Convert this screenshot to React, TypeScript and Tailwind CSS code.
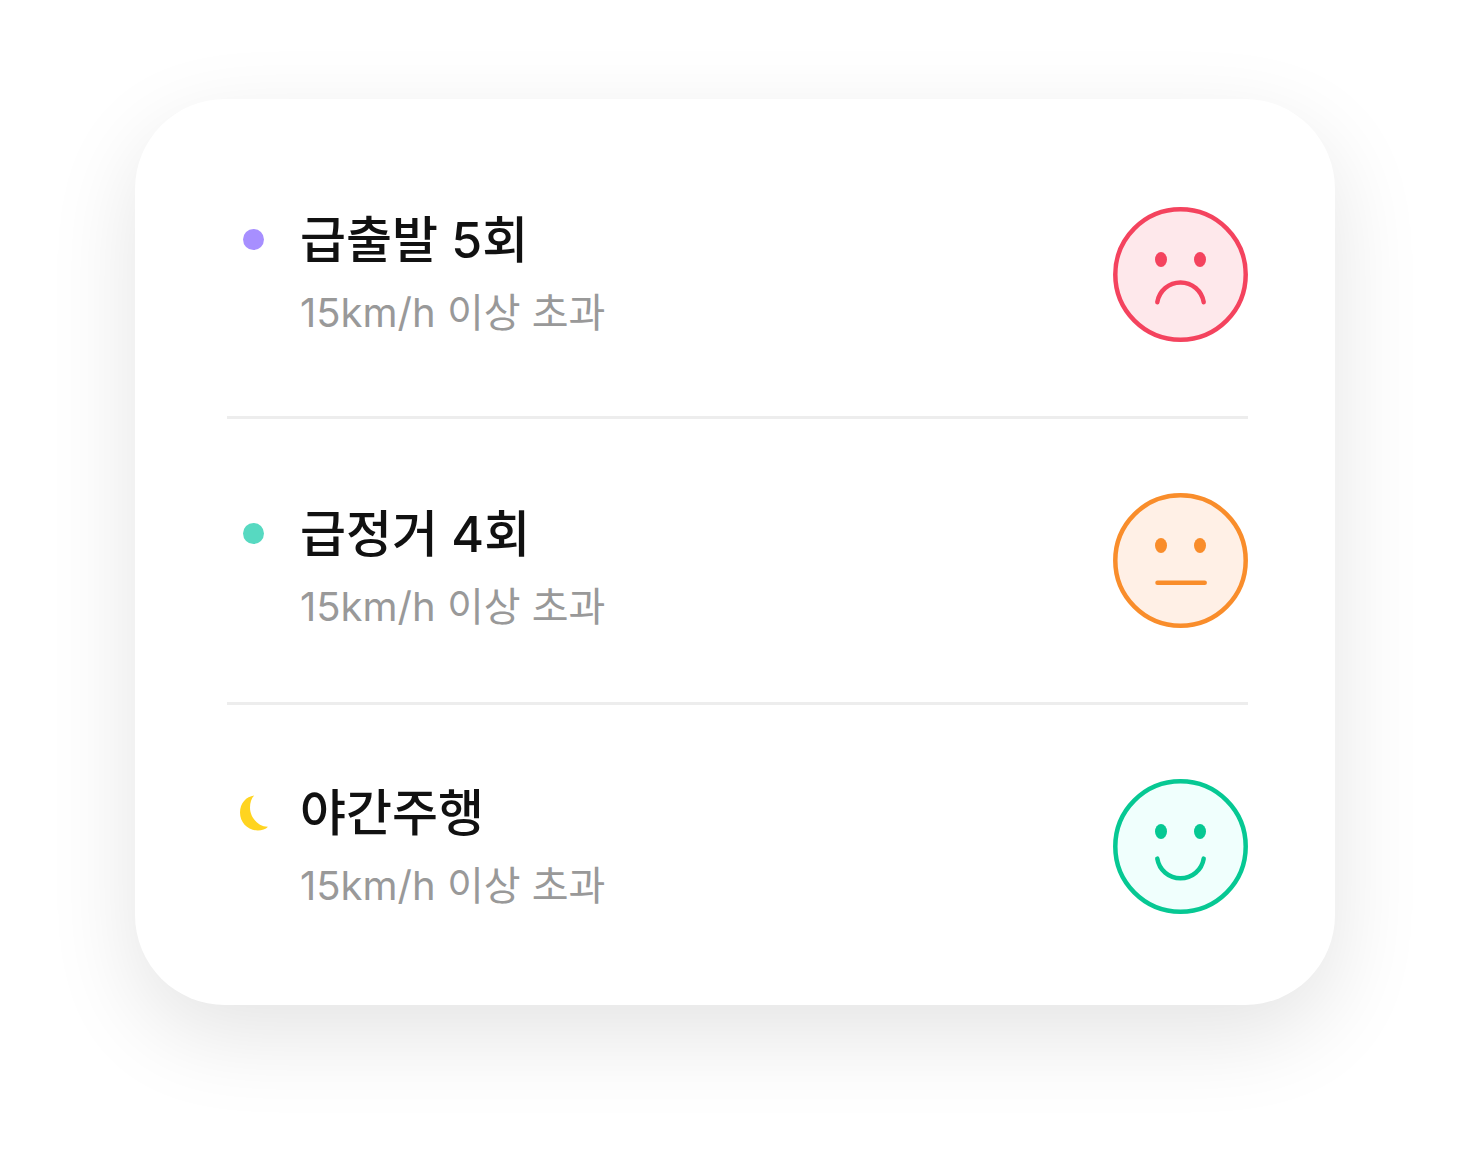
type Mood = "bad" | "normal" | "good";

const moods = {
  bad: {
    label: "나쁨",
    color: "#f4435e",
    fill: "#fee8eb",
    mouth: "M44.3 95.2A23.5 23.5 0 0 1 90.7 95.2",
  },
  normal: {
    label: "보통",
    color: "#f98d2b",
    fill: "#fff0e6",
    mouth: "M44.5 89.8H91.7",
  },
  good: {
    label: "좋음",
    color: "#06c893",
    fill: "#f0fffd",
    mouth: "M44.3 79.6A23.5 23.5 0 0 0 90.7 79.6",
  },
};

function Face({ mood }: { mood: Mood }) {
  const { label, color, fill, mouth } = moods[mood];

  return (
    <svg
      viewBox="0 0 135 135"
      role="img"
      aria-label={label}
      className="size-[135px] shrink-0"
    >
      <circle
        cx="67.5"
        cy="67.5"
        r="65.2"
        fill={fill}
        stroke={color}
        strokeWidth="4.5"
      />
      <ellipse cx="48" cy="52.5" rx="6" ry="7.5" fill={color} />
      <ellipse cx="87" cy="52.5" rx="6" ry="7.5" fill={color} />
      <path
        d={mouth}
        fill="none"
        stroke={color}
        strokeWidth="4.5"
        strokeLinecap="round"
      />
    </svg>
  );
}

function Moon() {
  return (
    <svg viewBox="0 0 28 36" className="h-9 w-7" aria-hidden="true">
      <path
        d="M14.2 0.5C6.2 1.5 0 8.2 0 17.5C0 27.5 7.8 35.5 17.8 35.5C21.9 35.5 25.6 34.3 28 31.7C18.5 32 10 22.5 10 12.5C10 7.5 11.4 3.3 14.2 0.5Z"
        fill="#ffd420"
      />
    </svg>
  );
}

function Dot({ className }: { className: string }) {
  return <span className={`size-[21px] rounded-full ${className}`} />;
}

const rows = [
  {
    title: "급출발 5회",
    icon: <Dot className="bg-[#a78fff]" />,
    mood: "bad" as Mood,
    spacing: "pb-0.5",
  },
  {
    title: "급정거 4회",
    icon: <Dot className="bg-[#57d9c1]" />,
    mood: "normal" as Mood,
    spacing: "pt-3.5",
  },
  {
    title: "야간주행",
    icon: <Moon />,
    mood: "good" as Mood,
    spacing: "",
  },
];

function App() {
  return (
    <main className="min-h-screen bg-white px-[135px] pt-[99px] pb-[171px] font-['Inter','Noto_Sans_CJK_KR',sans-serif]">
      <ul className="divide-y-3 divide-[#ededed] rounded-[90px] bg-white pt-[34px] pr-[87px] pb-[17px] pl-[92px] shadow-[0_30px_90px_rgba(0,0,0,0.11)]">
        {rows.map((row) => (
          <li
            key={row.title}
            className="flex items-center justify-between py-[74px]"
          >
            <div className={`flex ${row.spacing}`}>
              <div className="flex h-[50px] w-[53px] items-center justify-center">
                {row.icon}
              </div>
              <div className="ml-5 whitespace-nowrap">
                <h2 className="text-[50px] leading-[50px] font-medium text-[#111]">
                  {row.title}
                </h2>
                <p className="mt-7 text-[40px] leading-[40px] text-[#999]">
                  15km/h 이상 초과
                </p>
              </div>
            </div>
            <Face mood={row.mood} />
          </li>
        ))}
      </ul>
    </main>
  );
}

export default App;
